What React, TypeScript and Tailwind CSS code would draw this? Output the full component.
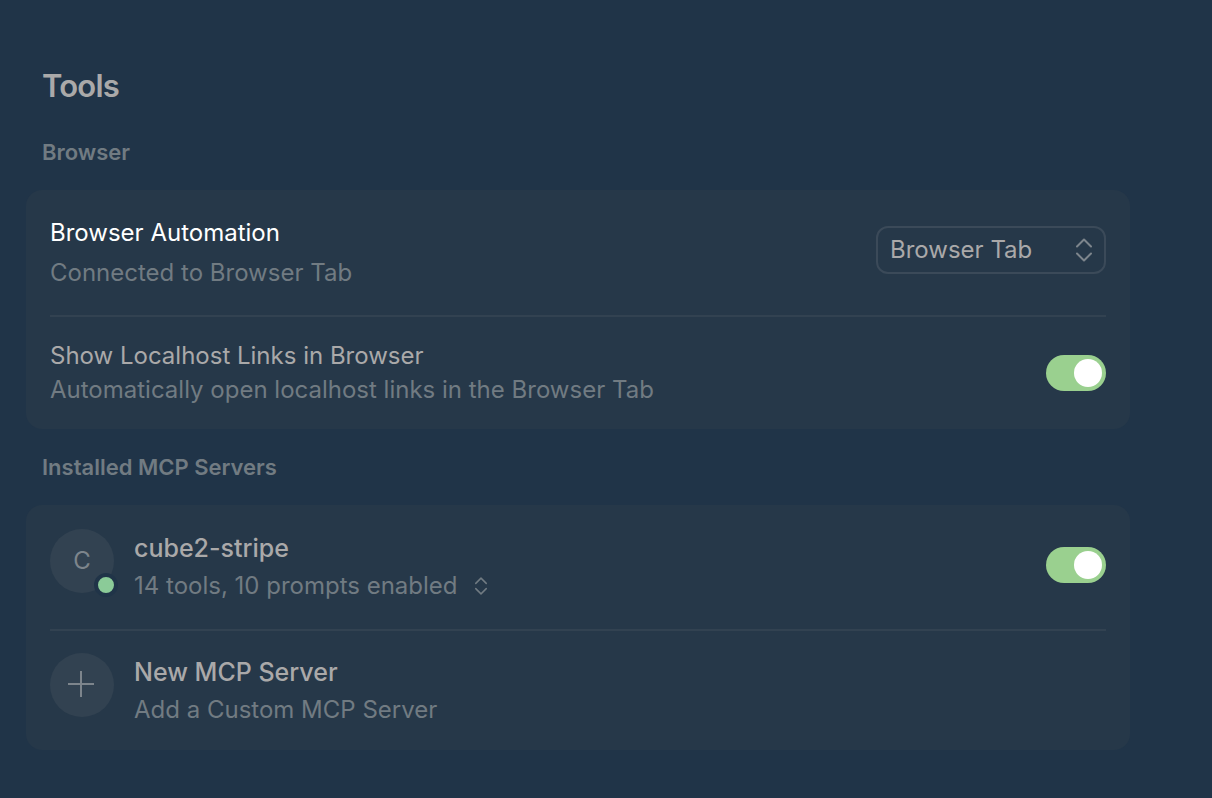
import React, { useState } from "react";

const Chevrons: React.FC<{ className: string }> = ({ className }) => {
  return (
    <svg
      className={className}
      viewBox="0 0 18 24"
      fill="none"
      stroke="currentColor"
      strokeWidth="2"
      strokeLinecap="round"
      strokeLinejoin="round"
      aria-hidden="true"
    >
      <path d="M2 8.5L9 1.5l7 7M2 15.5l7 7 7-7" />
    </svg>
  );
};

const Switch: React.FC<{ id: string; labelledBy: string }> = ({
  id,
  labelledBy,
}) => {
  const [checked, setChecked] = useState<boolean>(true);

  return (
    <input
      id={id}
      type="checkbox"
      role="switch"
      aria-labelledby={labelledBy}
      checked={checked}
      onChange={(e) => setChecked(e.target.checked)}
      className="flex h-9 w-15 shrink-0 cursor-pointer appearance-none items-center rounded-full bg-[#3b4a59] p-1 before:size-7 before:rounded-full before:bg-white checked:justify-end checked:bg-[#9ad08f]"
    />
  );
};

const Section: React.FC<{ title: string; children: React.ReactNode }> = ({
  title,
  children,
}) => {
  return (
    <section>
      <h2 className="px-4 py-6 text-[22px] leading-7 font-semibold text-[#717b82]">
        {title}
      </h2>
      <div className="rounded-2xl bg-[#263849] px-6">{children}</div>
    </section>
  );
};

const App: React.FC = () => {
  const [target, setTarget] = useState<string>("tab");

  return (
    <main className="min-h-screen bg-[#203448] pt-[66px] pr-[82px] pb-12 pl-[26px] font-['Inter',sans-serif] text-2xl text-[#aaa9a9]">
      <h1 className="mb-2 px-4 text-[31px] leading-10 font-semibold tracking-tight">
        Tools
      </h1>

      <Section title="Browser">
        <div className="flex items-center justify-between gap-6 border-b-2 border-[#324251] pt-[23px] pb-[22px]">
          <div className="leading-10">
            <label htmlFor="browser-automation" className="block text-white">
              Browser Automation
            </label>
            <p className="text-[#717b82]">Connected to Browser Tab</p>
          </div>
          <div className="relative mb-1.5 w-[230px] shrink-0">
            <select
              id="browser-automation"
              value={target}
              onChange={(e) => setTarget(e.target.value)}
              className="h-12 w-full appearance-none rounded-xl border-2 border-[#3b4a59] bg-transparent pr-10 pl-3"
            >
              <option value="tab">Browser Tab</option>
              <option value="off">Off</option>
            </select>
            <Chevrons className="pointer-events-none absolute top-3 right-3 h-6 w-5 text-[#7d858c]" />
          </div>
        </div>

        <div className="flex items-center justify-between gap-6 py-[22px]">
          <div className="leading-[34px]">
            <label
              id="localhost-label"
              htmlFor="localhost-links"
              className="block"
            >
              Show Localhost Links in Browser
            </label>
            <p className="text-[#717b82]">
              Automatically open localhost links in the Browser Tab
            </p>
          </div>
          <Switch id="localhost-links" labelledBy="localhost-label" />
        </div>
      </Section>

      <Section title="Installed MCP Servers">
        <div className="flex items-center gap-5 border-b-2 border-[#324251] py-6">
          <div className="relative flex size-16 shrink-0 items-center justify-center self-start rounded-full bg-[#324251] text-[#7d858c]">
            C
            <span className="absolute -right-1 -bottom-1 size-6 rounded-full border-4 border-[#203448] bg-[#8bcb98]"></span>
          </div>
          <div className="flex-1 leading-[38px]">
            <label
              id="server-label"
              htmlFor="server-enabled"
              className="block text-[25px] font-medium"
            >
              cube2-stripe
            </label>
            <button
              type="button"
              className="flex items-center gap-4 text-[#717b82]"
            >
              14 tools, 10 prompts enabled
              <Chevrons className="h-[18px] w-[14px]" />
            </button>
          </div>
          <div className="mb-1">
            <Switch id="server-enabled" labelledBy="server-label" />
          </div>
        </div>

        <button
          type="button"
          className="flex w-full items-center gap-5 pt-[22px] pb-[21px] text-left"
        >
          <span className="flex size-16 shrink-0 items-center justify-center self-start rounded-full bg-[#324251] text-[#7d858c]">
            <svg
              className="size-7"
              viewBox="0 0 28 28"
              stroke="currentColor"
              strokeWidth="2"
              aria-hidden="true"
            >
              <path d="M13 0v26M0 13h26" />
            </svg>
          </span>
          <span className="leading-[38px]">
            <span className="block text-[25px] font-medium">
              New MCP Server
            </span>
            <span className="block text-[#717b82]">
              Add a Custom MCP Server
            </span>
          </span>
        </button>
      </Section>
    </main>
  );
};

export default App;
